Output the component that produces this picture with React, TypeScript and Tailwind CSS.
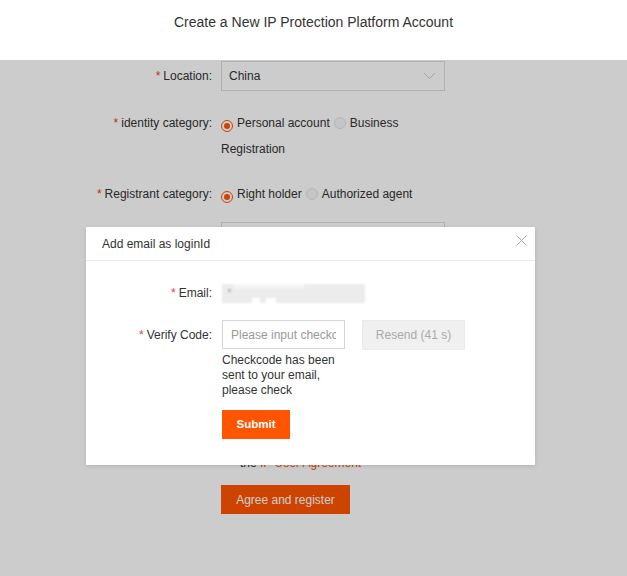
import { FC } from 'react';

const Req: FC = () => <span className="text-[#e4393c] mr-[3px]">*</span>;

const Radio: FC<{ checked?: boolean }> = ({ checked }) =>
  checked ? (
    <span className="inline-flex items-center justify-center align-[-2px] w-[12px] h-[12px] rounded-full border border-[#ff5500] bg-white mr-[4px]">
      <span className="w-[6px] h-[6px] rounded-full bg-[#ff5500]" />
    </span>
  ) : (
    <span className="inline-block align-[-2px] w-[12px] h-[12px] rounded-full border border-[#e3e3e3] bg-[#f7f7f7] mx-[4px]" />
  );

const Row: FC<{ label: string; className?: string; children: React.ReactNode }> = ({
  label,
  className = '',
  children,
}) => (
  <div className={`flex ${className}`}>
    <div className="w-[212px] text-right shrink-0">
      <Req />
      {label}
    </div>
    <div className="ml-[9px]">{children}</div>
  </div>
);

const TextBox: FC<{ value?: string }> = ({ value }) => (
  <div className="w-[224px] h-[30px] border border-[#dddddd] bg-white flex items-center px-[7px] text-[#333]">
    {value}
  </div>
);

const App: FC = () => {
  return (
    <div className="w-[627px] h-[576px] overflow-hidden font-['Liberation_Sans',Arial,sans-serif] text-[12px] text-[#333] bg-white">
      <div className="h-[60px] flex items-center justify-center pb-[16px] text-[14px] text-[#333]">
        Create a New IP Protection Platform Account
      </div>

      <div className="relative h-[516px] bg-white">
        <div className="pt-px">
          <Row label="Location:" className="leading-[30px]">
            <div className="w-[224px] h-[30px] border border-[#dddddd] bg-white flex items-center justify-between pl-[7px] pr-[8px]">
              <span>China</span>
              <svg width="13" height="8" viewBox="0 0 13 8" fill="none">
                <path d="M1 1l5.5 5.5L12 1" stroke="#cfcfcf" strokeWidth="1" />
              </svg>
            </div>
          </Row>

          <Row label="identity category:" className="mt-[19px] leading-[26px]">
            <div className="w-[224px]">
              <Radio checked />
              Personal account
              <Radio />
              Business Registration
            </div>
          </Row>

          <Row label="Registrant category:" className="mt-[19px] leading-[26px]">
            <div className="w-[224px]">
              <Radio checked />
              Right holder
              <Radio />
              Authorized agent
            </div>
          </Row>

          <Row label="Name:" className="mt-[15px] leading-[30px]">
            <TextBox />
          </Row>
          <Row label="Email:" className="mt-[20px] leading-[30px]">
            <TextBox />
          </Row>
          <Row label="Password:" className="mt-[20px] leading-[30px]">
            <TextBox />
          </Row>
          <Row label="Confirm:" className="mt-[20px] leading-[30px]">
            <TextBox />
          </Row>

          <div className="ml-[221px] mt-[37px] leading-[16px]">
            <div className="flex items-center">
              <span className="w-[12px] h-[12px] border border-[#cccccc] bg-white mr-[7px]" />
              I have read and agree to
            </div>
            <div className="pl-[19px]">
              the <span className="text-[#ff5500]">IP User Agreement</span>
            </div>
          </div>

          <button className="ml-[221px] mt-[14px] w-[129px] h-[29px] bg-[#ff5500] text-white text-[12px]">
            Agree and register
          </button>
        </div>

        <div className="absolute inset-0 bg-black/20" />

        <div className="absolute left-[86px] top-[167px] w-[449px] h-[238px] bg-white shadow-[0_1px_4px_rgba(0,0,0,0.12)]">
          <div className="relative h-[34px] flex items-center pl-[16px] border-b border-[#e9e9e9] text-[#333]">
            Add email as loginId
            <svg className="absolute left-[430px] top-[8px]" width="11" height="11" viewBox="0 0 11 11" fill="none">
              <path d="M0.5 0.5l10 10M10.5 0.5l-10 10" stroke="#aaaaaa" strokeWidth="1" />
            </svg>
          </div>

          <div className="pt-[22px]">
            <div className="flex items-center h-[20px]">
              <div className="w-[126px] text-right shrink-0">
                <Req />
                Email:
              </div>
              <div className="ml-[10px] relative w-[143px] h-[19px] bg-[#ececec] blur-[1px]">
                <span className="absolute left-[6px] top-[5px] w-[3px] h-[3px] bg-[#bbbbbb]" />
                <span className="absolute left-[12px] top-[0px] w-[70px] h-[4px] bg-[#f6f6f6]" />
                <span className="absolute left-[30px] top-[14px] w-[8px] h-[5px] bg-white" />
                <span className="absolute left-[44px] top-[14px] w-[10px] h-[5px] bg-white" />
              </div>
            </div>

            <div className="flex mt-[17px]">
              <div className="w-[126px] text-right shrink-0 leading-[30px]">
                <Req />
                Verify Code:
              </div>
              <div className="ml-[10px]">
                <div className="flex">
                  <input
                    className="w-[123px] h-[29px] border border-[#d5d5d5] px-[8px] outline-none placeholder:text-[#999] text-[12px]"
                    type="text"
                    placeholder="Please input checkcode"
                  />
                  <button className="ml-[17px] w-[103px] h-[30px] bg-[#f0f0f0] border border-[#ebebeb] text-[#aaaaaa] text-[12px]">
                    Resend (41 s)
                  </button>
                </div>
                <div className="w-[123px] mt-[3px] leading-[15px] text-[#333]">
                  Checkcode has been sent to your email, please check
                </div>
                <button className="mt-[12px] w-[68px] h-[29px] bg-[#ff5500] text-white font-bold text-[11.5px]">
                  Submit
                </button>
              </div>
            </div>
          </div>
        </div>
      </div>
    </div>
  );
};

export default App;
